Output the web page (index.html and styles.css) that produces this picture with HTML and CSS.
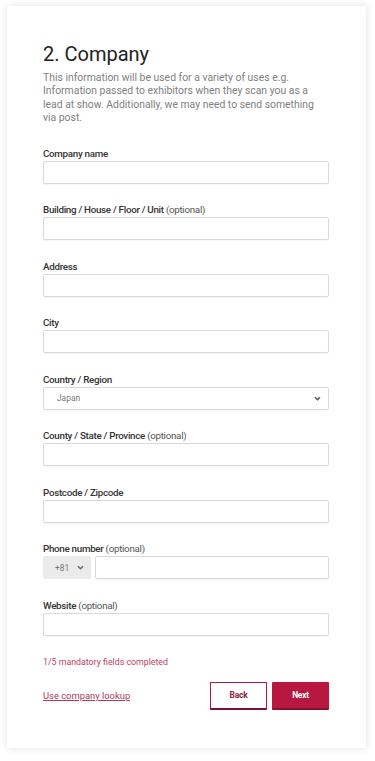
FILE: index.html
```html
<!DOCTYPE html>
<html>
<head>
	<title>Registration - Company</title>
	<link rel="stylesheet" href="styles.css">
</head>
<body>
	<div class="card">
		<h1 class="title">2. Company</h1>
		<p class="intro">This information will be used for a variety of uses e.g. Information passed to exhibitors when they scan you as a lead at show. Additionally, we may need to send something via post.</p>

		<form class="fields">
			<div class="field">
				<label for="company">Company name</label>
				<input id="company" class="text" type="text">
			</div>
			<div class="field">
				<label for="building">Building / House / Floor / Unit <span class="opt">(optional)</span></label>
				<input id="building" class="text" type="text">
			</div>
			<div class="field">
				<label for="address">Address</label>
				<input id="address" class="text" type="text">
			</div>
			<div class="field">
				<label for="city">City</label>
				<input id="city" class="text" type="text">
			</div>
			<div class="field">
				<label for="country">Country / Region</label>
				<div class="select" id="country">
					<span>Japan</span>
					<svg class="chev" width="7" height="5" viewBox="0 0 8 6"><path d="M1 1.5 L4 4.5 L7 1.5" fill="none" stroke="#555" stroke-width="1.7"/></svg>
				</div>
			</div>
			<div class="field">
				<label for="county">County / State / Province <span class="opt">(optional)</span></label>
				<input id="county" class="text" type="text">
			</div>
			<div class="field">
				<label for="postcode">Postcode / Zipcode</label>
				<input id="postcode" class="text" type="text">
			</div>
			<div class="field">
				<label for="phone">Phone number <span class="opt">(optional)</span></label>
				<div class="phone">
					<div class="dial">
						<span>+81</span>
						<svg class="chev" width="7" height="5" viewBox="0 0 8 6"><path d="M1 1.5 L4 4.5 L7 1.5" fill="none" stroke="#666" stroke-width="1.7"/></svg>
					</div>
					<input id="phone" class="text" type="text">
				</div>
			</div>
			<div class="field">
				<label for="website">Website <span class="opt">(optional)</span></label>
				<input id="website" class="text" type="text">
			</div>
		</form>

		<p class="status">1/5 mandatory fields completed</p>

		<div class="actions">
			<a href="#" class="lookup">Use company lookup</a>
			<div class="buttons">
				<button class="btn back">Back</button>
				<button class="btn next">Next</button>
			</div>
		</div>
	</div>
</body>
</html>
```

FILE: styles.css
```css
/* Base */

html, body { margin: 0; padding: 0; background: #fff; }
body { padding: 6px 9px 14px 7px; font-family: Roboto, "Liberation Sans", sans-serif; color: #333; }

/* Card */

.card { background: #fff; box-shadow: 0 0 8px rgba(0,0,0,0.12); padding: 36px 37px 38px 36px; }
.title { margin: 0; font-size: 20px; line-height: 24px; font-weight: 400; color: #222; }
.intro { margin: 5px 0 0; font-size: 10.4px; line-height: 13.4px; color: #808080; }

/* Fields */

.fields { display: flex; flex-direction: column; gap: 19.5px; margin-top: 22px; }
.field label { display: block; font-size: 9.8px; line-height: 13px; margin-bottom: 1px; font-weight: 500; color: #333; letter-spacing: -0.3px; }
.field .opt { font-weight: 400; color: #555; }
.text { display: block; box-sizing: border-box; width: 100%; height: 23px; margin: 0; border: 1px solid #dadada; border-radius: 2px; background: #fff; box-shadow: 0 1px 1px rgba(0,0,0,0.04); font: inherit; }
.select { box-sizing: border-box; height: 23px; border: 1px solid #dadada; border-radius: 2px; display: flex; align-items: center; justify-content: space-between; padding: 0 7px 0 13px; font-size: 8.4px; color: #777; box-shadow: 0 1px 1px rgba(0,0,0,0.04); }
.chev { display: block; }
.phone { display: flex; gap: 4px; }
.dial { box-sizing: border-box; width: 48px; height: 23px; flex: none; background: #ebebeb; border-radius: 2px; display: flex; align-items: center; gap: 8px; padding-left: 12px; font-size: 8.4px; color: #777; }

/* Footer */

.status { margin: 20px 0 0; font-size: 8.8px; line-height: 12px; color: #c0405e; }
.actions { display: flex; align-items: center; justify-content: space-between; margin-top: 14px; }
.lookup { font-size: 9.4px; color: #b33a5a; text-decoration: underline; }
.buttons { display: flex; gap: 5px; }
.btn { box-sizing: border-box; width: 57px; height: 28px; font-family: inherit; font-size: 8.4px; font-weight: 700; border-radius: 1px; cursor: pointer; letter-spacing: -0.2px; }
.back { background: #fff; color: #8c2440; border: 1px solid #b3173f; border-bottom: 2px solid #7b1230; }
.next { background: #b8173f; color: #fff; border: 0; border-bottom: 2px solid #8a0f2e; }
```
